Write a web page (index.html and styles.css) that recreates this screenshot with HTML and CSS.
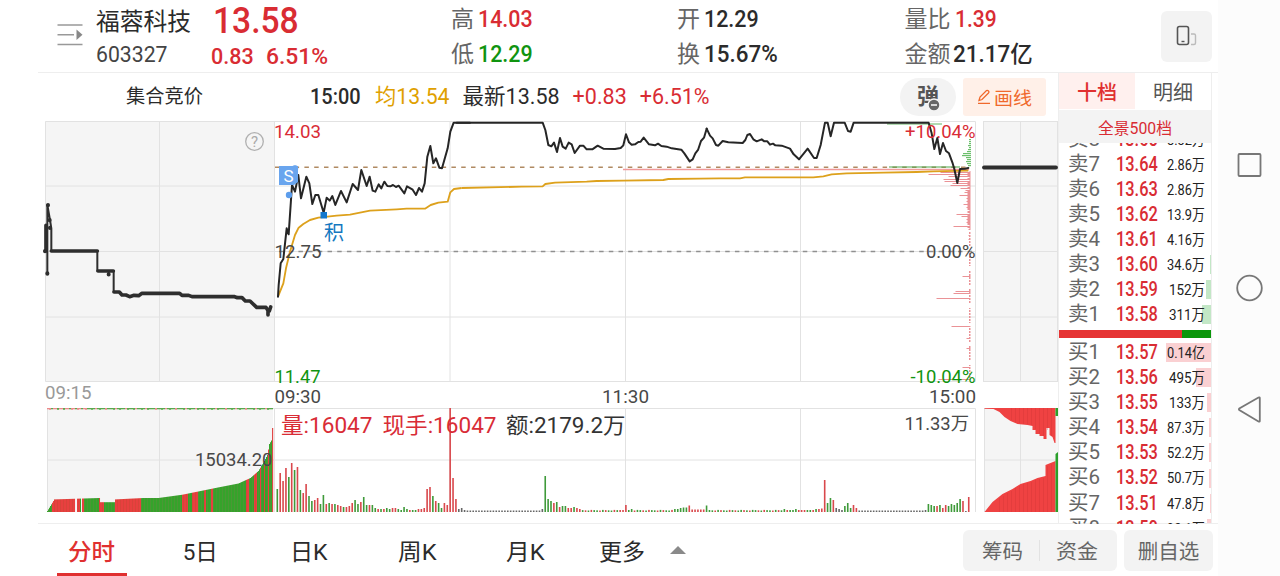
FILE: index.html
```html
<!DOCTYPE html>
<html lang="zh-CN">
<head>
<meta charset="utf-8">
<title>福蓉科技 603327</title>
<link rel="stylesheet" href="styles.css">
</head>
<body>
<div class="app">
  <header class="head">
    <svg class="menu" width="28" height="24" viewBox="0 0 28 24"><g fill="none" stroke="#999" stroke-width="1.5"><path d="M1.500 2H26.500M1.500 11.700H18M1.500 21.500H26.500"/></g><path d="M20.500 6.500L26.500 11.700L20.500 17Z" fill="#888"/></svg>
    <div class="col c-name"><div class="name"><span data-w="95">福蓉科技</span></div><div class="code"><span data-w="72">603327</span></div></div>
    <div class="col c-price red"><div class="price"><span data-w="86">13.58</span></div><div class="chg"><span data-w="43">0.83</span><span class="pct" data-w="62">6.51%</span></div></div>
    <div class="col c-hi"><div><i>高</i><b class="red" data-w="55">14.03</b></div><div><i>低</i><b class="green" data-w="55">12.29</b></div></div>
    <div class="col c-open"><div><i>开</i><b data-w="55">12.29</b></div><div><i>换</i><b data-w="74">15.67%</b></div></div>
    <div class="col c-vol"><div><i>量比</i><b class="red" data-w="42">1.39</b></div><div><i>金额</i><b class="amt" data-w="80">21.17亿</b></div></div>
    <div class="rot"><svg width="22" height="22" viewBox="0 0 22 22" fill="none"><rect x="2.500" y="1.500" width="11" height="18" rx="2" stroke="#555" stroke-width="1.600"/><path d="M6.500 16.500H9.500" stroke="#555" stroke-width="1.400"/><path d="M16 9H19Q20.500 9 20.500 10.500V18Q20.500 19.500 19 19.500H16" stroke="#bbb" stroke-width="1.400"/></svg></div>
  </header>
  <main class="main">
    <section class="left">
      <div class="bar">
        <span class="t-auc" data-w="77">集合竞价</span>
        <span class="t-time" data-w="51">15:00</span>
        <span class="t-avg" data-w="75">均13.54</span>
        <span class="t-new" data-w="97">最新13.58</span>
        <span class="t-d red" data-w="54">+0.83</span>
        <span class="t-p red" data-w="70">+6.51%</span>
        <div class="danmu"><b>弹</b><svg width="14" height="14" viewBox="0 0 14 14"><circle cx="7" cy="7" r="6" fill="#666" stroke="#f3f3f3" stroke-width="1.500"/><path d="M4 7H10" stroke="#fff" stroke-width="1.500"/></svg></div>
        <div class="draw"><svg width="15" height="16" viewBox="0 0 15 16" fill="none" stroke="#f0692c" stroke-width="1.300"><path d="M2 11.500L3 8L9.500 1.500Q10.500 1 11.500 2Q12.500 3 11.500 4L5 10.500ZM1 14.300H13"/></svg><span data-w="38">画线</span></div>
      </div>
      <svg class="chart" width="1020" height="402" viewBox="38 121 1020 402">
        <rect x="45" y="121" width="229" height="260.500" fill="#f5f5f5"/>
        <rect x="47" y="408" width="226" height="104" fill="#f5f5f5"/>
        <rect x="983" y="121" width="75" height="260.500" fill="#f5f5f5"/>
        <rect x="984.500" y="408" width="73.500" height="104" fill="#f5f5f5"/>
        <g class="grid">
          <path d="M45.500 381.500V121.500H975.500V381.500ZM45.500 186H975.500M45.500 251.500H975.500M45.500 317H975.500M159.500 121V381M450 121V381M625.500 121V381M800.500 121V381M274.500 121V381M983 121.500H1058M983 186H1058M983 251.500H1058M983 317H1058M983 381.500H1058M983.500 121V381M1020.500 121V381M1057.500 121V381"/>
          <path d="M47.500 512V408.500H975.500V512M47.500 460H975.500M159.500 408V512M274.500 408V512M450 408V512M625.500 408V512M800.500 408V512M984.500 408V512M984 408.500H1058M984 460H1058M1020.500 408V512"/>
        </g>
        <g id="auction"></g>
        <g transform="translate(984.500 408)">
          <path fill="#ef4242" d="M0 0H71V35H70L68 29L65 27V20H62V31H59V28H55V26H51V22H48V18L43 17L33 16L26 13L20 9L15 4L9 1L0 .8Z"/>
          <path fill="#ef4242" d="M0 104L8 94L18 86L28 81L36 76L46 73L53 70L61 68V57L71 53V104Z"/>
          <path fill="#2ba02b" d="M71 0H73.500V8H71ZM71 46L73.500 44V104H71Z"/>
          <path stroke="#c83232" stroke-opacity=".35" stroke-width=".8" d="M15 104V90M19 104V88M23 104V85M27 104V83M31 104V80M35 104V78M39 104V76M43 104V75M47 104V74M51 104V72M55 104V71M59 104V70M63 104V58M67 104V56M27 0V12M31 0V14M35 0V15M39 0V16M43 0V16M47 0V17M51 0V21M55 0V26M59 0V28M63 0V22M67 0V28"/>
        </g>
        <g id="volume"></g>
        <g id="chips"></g>
        <path d="M623 169.500H969" stroke="#f09a9a" stroke-width="1.300"/>
        <path d="M275 167.200H969" stroke="#b08a62" stroke-width="1.500" stroke-dasharray="4.500 5.300"/>
        <path d="M889 167H960" stroke="#4fa84f" stroke-width="1.200"/><path d="M887 124H942" stroke="#65b565" stroke-width="1.200"/>
        <path d="M279 251.500H975" stroke="#909090" stroke-width="1.600" stroke-dasharray="4.500 5.200"/>
        <g class="avg">
          <polyline transform="translate(270 115) scale(.33333)" points="24,545 40,505 48,460 60,410 75,360 86,338 100,327 120,315 145,308 200,302 240,299 270,293 300,287 380,283 410,281 465,281 482,270 505,263 533,260 541,232 552,222 575,219"/>
          <polyline transform="translate(440 115) scale(.33333)" points="65,219 245,215 308,214 316,207 345,203 440,200 470,198 550,197 670,195 685,192 780,191 840,190"/>
          <polyline transform="translate(700 115) scale(.33333)" points="60,190 120,190 135,187 340,187 370,184 395,178 440,175 550,173 650,171 700,169 805,167"/>
        </g>
        <g class="line">
          <polyline transform="translate(270 115) scale(.33333)" points="24,545 26,510 32,445 40,432 50,340 56,358 66,210 75,230 85,180 93,250 109,185 118,205 127,267 136,240 145,240 161,293 170,248 179,257 187,243 196,270 213,228 230,262 248,207 264,225 274,165 290,213 299,185 308,227 316,230 326,208 334,220 343,200 352,213 361,214 369,210 378,216 386,212 403,235 411,214 428,224 438,240 447,219 456,230 464,205 472,125 481,93 490,145 498,130 508,158 516,160 533,100 541,50 551,23 600,23"/>
          <polyline transform="translate(440 115) scale(.33333)" points="50,23 308,23 316,45 325,90 334,94 342,83 351,111 360,69 368,95 377,101 386,83 395,88 404,114 420,92 430,92 440,103 457,103 473,92 490,101 525,102 542,99 550,91 558,58 567,82 575,89 585,88 595,81 602,80 611,68 627,88 645,91 654,86 664,93 680,95 695,100 724,104 733,115 749,139 758,133 766,115 774,105 783,78 792,68 800,41"/>
          <polyline transform="translate(700 115) scale(.33333)" points="20,41 30,62 38,70 48,90 55,92 68,78 85,82 128,84 136,75 142,60 150,57 160,73 170,79 185,73 193,79 202,79 210,89 219,86 226,91 245,92 270,101 281,118 297,133 323,101 342,129 350,129 362,90 375,23 383,23 392,64 402,23 434,23 444,48 452,50 461,23 686,23 695,55 703,102 712,69 720,117 729,84 738,108 747,115 757,142 763,162 772,204 780,162 795,161 805,159"/>
        </g>
        <g transform="translate(38 115) scale(.33333)" fill="none" stroke="#2e2e2e" stroke-linecap="round" stroke-linejoin="round">
          <path stroke-width="11" d="M24 331V408M40 408H178M180 468H226M228 531H244L252 540H264L275 545L288 541L302 542L312 535H425L432 541H452L462 545H590L598 548H612L622 558H636L656 577H684L690 587V600M698 576L694 588"/>
          <path stroke-width="6" d="M28 475V270L36 315L40 340V408M178 408V468M212 468V478M227 468V531"/>
          <path stroke-width="12" d="M28 475V476M30 270V271M35 315V316M36 338V339M21 408V408.500M212 478V478.500"/>
        </g>
        <path d="M984 167.500H1056" stroke="#2e2e2e" stroke-width="3.800" stroke-linecap="round"/>
        <circle cx="295" cy="168.500" r="3.200" fill="#5597e8"/><circle cx="289" cy="195" r="3.200" fill="#5c9dec"/>
        <path d="M279 166H298V182L294 185H279Z" fill="#69a5ee"/>
        <text x="288.500" y="182" font-size="17" fill="#fff" text-anchor="middle">S</text>
        <rect x="320.500" y="212" width="6.500" height="6.500" fill="#1478cc"/>
        <text x="324" y="239.500" font-size="20" fill="#1478c0">积</text>
        <circle cx="254.500" cy="141.500" r="8.800" fill="none" stroke="#b0b0b0" stroke-width="1.300"/>
        <text x="254.500" y="147" font-size="15" fill="#aaa" text-anchor="middle">?</text>
        <g font-size="18.500" fill="#484848">
          <text x="274" y="138" fill="#d92c36" textLength="47" lengthAdjust="spacingAndGlyphs">14.03</text>
          <text x="274.500" y="257.700" textLength="47" lengthAdjust="spacingAndGlyphs">12.75</text>
          <text x="274.500" y="383" fill="#109410" textLength="46" lengthAdjust="spacingAndGlyphs">11.47</text>
          <text x="905" y="138" fill="#d92c36" textLength="70.500" lengthAdjust="spacingAndGlyphs">+10.04%</text>
          <text x="926" y="257.700" textLength="49.500" lengthAdjust="spacingAndGlyphs">0.00%</text>
          <text x="910.500" y="383" fill="#109410" textLength="65" lengthAdjust="spacingAndGlyphs">-10.04%</text>
          <text x="45" y="399" fill="#999" textLength="46.500" lengthAdjust="spacingAndGlyphs">09:15</text>
          <text x="274.500" y="402.500" textLength="46.500" lengthAdjust="spacingAndGlyphs">09:30</text>
          <text x="602" y="402.500" textLength="47" lengthAdjust="spacingAndGlyphs">11:30</text>
          <text x="929" y="402.500" textLength="47" lengthAdjust="spacingAndGlyphs">15:00</text>
          <text x="195" y="466" textLength="77.500" lengthAdjust="spacingAndGlyphs">15034.20</text>
          <text x="904.500" y="430" textLength="64.500" lengthAdjust="spacingAndGlyphs">11.33万</text>
        </g>
        <g font-size="22" fill="#d92c36">
          <text x="281" y="433" textLength="91.500" lengthAdjust="spacingAndGlyphs">量:16047</text>
          <text x="382.500" y="433" textLength="114" lengthAdjust="spacingAndGlyphs">现手:16047</text>
          <text x="506" y="433" fill="#333" textLength="119.500" lengthAdjust="spacingAndGlyphs">额:2179.2万</text>
        </g>
      </svg>
    </section>
    <aside class="book">
      <div class="btabs"><div class="on"><span data-w="40">十档</span></div><div><span data-w="40">明细</span></div></div>
      <div class="full"><span data-w="74">全景500档</span></div>
      <div class="rows sell" id="sell"></div>
      <div class="ratio"></div>
      <div class="rows buy" id="buy"></div>
    </aside>
  </main>
  <footer class="foot">
    <div class="tab on"><span data-w="47">分时</span></div><div class="tab"><span data-w="35">5日</span></div><div class="tab"><span data-w="38">日K</span></div><div class="tab"><span data-w="39">周K</span></div><div class="tab"><span data-w="39">月K</span></div>
    <div class="more"><span data-w="46">更多</span><svg width="16" height="8" viewBox="0 0 16 8"><path d="M0 8L8 0L16 8Z" fill="#8a8a8a"/></svg></div>
    <div class="btn two"><span data-w="41">筹码</span><em></em><span data-w="42">资金</span></div>
    <div class="btn one"><span data-w="62">删自选</span></div>
  </footer>
</div>
<nav class="nav"><svg width="62" height="576" viewBox="1218 0 62 576" fill="none" stroke="#777" stroke-width="1.800"><rect x="1238.500" y="154" width="22" height="22" rx="1"/><circle cx="1249.500" cy="288" r="12.300"/><path d="M1259.800 397.800V421.200Q1259.500 422 1258.500 421.500L1239.300 410Q1238.500 409.200 1239.300 408.500L1258.500 397.500Q1259.500 397 1259.800 397.800Z"/></svg></nav>
<script src="app.js"></script>
</body>
</html>
```
FILE: styles.css
```css
* { box-sizing: border-box; }
body { margin: 0; width: 1280px; height: 576px; overflow: hidden; display: flex; background: #fff; color: #2b2b2b; font-family: Roboto, "Noto Sans CJK SC", sans-serif; }
span, b, i { font-style: normal; font-weight: inherit; white-space: nowrap; display: inline-block; transform-origin: 0 50%; flex: none; }
.red { color: #d92c33; }
.green { color: #109410; }
.app { width: 1218px; height: 576px; padding-left: 38px; display: flex; flex-direction: column; }
.nav { width: 62px; height: 576px; background: #fcfcfc; }
.nav svg { display: block; }

.head { height: 73px; border-bottom: 1px solid #eee; display: flex; flex: none; }
.menu { margin: 23px 0 0 18px; width: 28px; flex: none; }
.col { padding-top: 3px; flex: none; }
.col > div { height: 34px; line-height: 34px; display: flex; font-size: 23px; font-weight: 500; }
.col > div + div { margin-top: 1px; }
.col i { color: #666; font-weight: 400; margin-right: 4px; }
.col .amt { margin-left: -2px; }
.c-name { margin-left: 12px; width: 115px; }
.col .name { font-size: 24px; font-weight: 400; padding-top: 2px; }
.col .code { font-size: 21.500px; font-weight: 400; color: #444; }
.c-price { width: 240px; }
.col .price { font-size: 37.500px; padding-left: 2px; }
.col .chg { font-size: 22.500px; padding-top: 1px; }
.pct { margin-left: 12px; }
.c-hi { width: 226px; }
.c-open { width: 227.500px; }
.c-vol { width: 256px; }
.rot { width: 51px; height: 51px; margin-top: 10.500px; border-radius: 6px; background: #f3f3f3; display: flex; align-items: center; justify-content: center; }

.main { height: 450px; display: flex; flex: none; }
.left { width: 1020px; flex: none; }
.bar { height: 48px; display: flex; align-items: center; font-size: 21.500px; }
.bar > span { line-height: 32px; height: 32px; }
.t-auc { margin-left: 87.500px; font-size: 19px; }
.t-time { margin-left: 107px; font-weight: 500; }
.t-avg { margin-left: 15px; color: #e0a000; }
.t-new { margin-left: 13px; }
.t-d { margin-left: 13px; }
.t-p { margin-left: 13px; }
.danmu { margin-left: 190.500px; width: 56px; height: 38px; border-radius: 19px; background: #f3f3f3; display: flex; align-items: center; justify-content: center; color: #555; flex: none; }
.danmu b { font-size: 22px; font-weight: 700; line-height: 30px; }
.danmu svg { margin: 15px -2px 0 -12px; }
.draw { margin-left: 7px; width: 83px; height: 38px; border-radius: 3px; background: #fff0e8; color: #f0692c; font-size: 18.500px; display: flex; align-items: center; justify-content: center; gap: 2px; flex: none; }
.chart { display: block; font-family: Roboto, "Noto Sans CJK SC", sans-serif; }
.grid path { fill: none; stroke: #e2e2e2; stroke-width: 1; }
.line polyline { fill: none; stroke: #262626; stroke-width: 6; stroke-linejoin: round; stroke-linecap: round; }
.avg polyline { fill: none; stroke: #dda11c; stroke-width: 5.500; stroke-linejoin: round; }

.book { width: 154px; border-left: 1px solid #eee; border-right: 1px solid #eee; display: flex; flex-direction: column; }
.btabs { height: 37px; display: flex; font-size: 20px; color: #555; flex: none; }
.btabs div { width: 76px; height: 36px; display: flex; align-items: center; justify-content: center; }
.btabs .on { background: #fff0ee; color: #e03030; font-weight: 500; }
.full { height: 33px; background: #f3f3f3; color: #d92c33; font-size: 16px; display: flex; align-items: center; justify-content: center; flex: none; }
.rows { display: flex; flex-direction: column; overflow: hidden; flex: none; }
.sell { height: 184.500px; justify-content: flex-end; }
.buy { height: 183.500px; }
.row { height: 25.100px; flex: none; display: grid; grid-template-columns: 48px 45px 1fr; align-items: center; justify-items: start; padding: 0 6.500px 0 9px; line-height: 25px; color: #666; font-size: 20.500px; background: linear-gradient(var(--c), var(--c)) right 50% / var(--d) 19px no-repeat; }
.row > span { margin-top: -1px; }
.row .p { font-size: 19.500px; font-weight: 500; color: #d92c33; }
.row .q { font-size: 14.500px; color: #222; justify-self: end; padding-top: 2px; }
.ratio { height: 8px; margin: 2px 0 2.500px; background: linear-gradient(90deg, #e63434 81%, #0a960a 81%); flex: none; }

.foot { height: 53px; border-top: 1px solid #eee; display: flex; font-size: 22.500px; }
.tab { width: 108.500px; display: flex; align-items: center; justify-content: center; padding-bottom: 1px; flex: none; }
.tab.on { width: 70px; margin: 0 19px; color: #e03030; font-weight: 500; border-bottom: 3px solid #e03030; padding: 2px 0 0; }
.more { width: 383px; padding: 0 0 1px 19px; display: flex; align-items: center; gap: 25px; flex: none; }
.btn { height: 41px; margin-top: 6px; border-radius: 6px; background: #f3f3f3; color: #666; font-size: 20.500px; display: flex; align-items: center; justify-content: center; flex: none; padding-bottom: 1px; }
.two { width: 154px; gap: 16px; }
.two em { width: 1px; height: 21px; background: #e2e2e2; }
.one { width: 89px; margin-left: 7px; }
```
FILE: app.js
```js
const NS = 'http://www.w3.org/2000/svg';
const R = '#d9484c', G = '#3f9a3a', K = '#666';
function rect(id, x, y, w, h, fill) {
  const r = document.createElementNS(NS, 'rect');
  r.setAttribute('x', x); r.setAttribute('y', y);
  r.setAttribute('width', w); r.setAttribute('height', h);
  r.setAttribute('fill', fill);
  document.getElementById(id).appendChild(r);
}

// minute volume: index -> colour letter + height
const vol = {};
function put(start, str) { str.split(' ').forEach((s, i) => { vol[start + i] = s; }); }
put(0, 'g23 r39 r31 r44 g35 r49 g42 r45 g22 r19 r28 g16 g11 r12 r14 g8 g17 r8 g9 r8 g8 r7 r6 g5 r5 r6 r9 g12 g8 r10 g15 g7 r7 g7 g4 r3 g3 r3 g4 g3 r4 r4 g3 g2 g5 g3 r2 g2 g2 r3 r3 r4 r23 r25 g16 r11 g9 g4 r9 r7 r104 r34 r13 k3 k4 k2');
put(92, 'k3 g36 g13 g11 r9 g10 r5 g6 g6 r4 r4 g5 r4 r3');
put(119, 'r2 r2 r7 g2 g3');
put(138, 'g3 g3 g4 g4.5 g4.5 r6.5 r2.5 r2.5 r2.5 r2.5 r2.5 g6.5 g2');
put(176, 'g3 r2 g2 g2 g3 r2 r2 r2 g2 g2 r2 g3 r3 r3.5 r32 g9 g14 r12 k4 k3 k2 g6 g9 g4 r7 r4');
put(225, 'k2 g8 g7 g6 r6 g7 r4 r7 g6 g8 g7 g9');
put(237, 'g13 r11 k1 r15');
for (let i = 0; i <= 240; i++) {
  const quiet = (i > 62 && i < 93) || (i > 201 && i < 226);
  const s = vol[i] || (quiet ? 'k1.5' : 'grrgg'[i * 3 % 5] + (1.5 + i * 7 % 4 * .2));
  const h = +s.slice(1);
  rect('volume', 276.5 + 2.881 * i, 512 - h, 1.6, h, { r: R, g: G, k: K }[s[0]]);
}

// call auction: matched volume profile
const prof = [[47, 1], [54, 12.6], [99, 14], [99.1, 9.8], [114.5, 9.8], [115, 12.6], [143, 14], [158, 14], [182, 17.3], [218, 24.6], [238, 28.5], [250, 34], [258, 41], [264, 51], [267, 57], [269, 68], [271.3, 72]];
const redSpans = [[52, 75], [77, 80], [82, 84], [99, 104], [115, 141], [182, 188], [192, 198], [204, 206], [211, 213], [246, 249], [254, 257], [260, 261], [264, 265], [268, 269]];
for (let x = 47; x < 271.5; x++) {
  if (x === 75 || x === 76 || x === 81) continue;
  let k = 0; while (k < prof.length - 2 && prof[k + 1][0] < x) k++;
  const a = prof[k], b = prof[k + 1];
  const h = a[1] + (b[1] - a[1]) * Math.min(1, (x - a[0]) / (b[0] - a[0]));
  const red = redSpans.some(s => x >= s[0] && x < s[1]);
  rect('auction', x, 512 - h, 1.03, h, red ? (x % 3 ? '#e8403f' : '#d8433a') : (x % 3 ? '#35a32b' : '#4a9835'));
}
rect('auction', 272, 428, 1.2, 84, '#e04848');
for (let x = 47; x < 273; x += 2) rect('auction', x, 408, 2, x % 7 < 2 ? 1.8 : 1.3, (x < 84 ? x % 3 : x % 5 === 0) ? '#ec8a8a' : '#5aa84e');

// price distribution bars, growing left from x = 970
for (let y = 139; y < 166; y += 2) { const l = [2, 2, 2, 3, 2, 3, 4, 8, 9, 5, 4, 5, 4, 3][(y - 139) / 2]; rect('chips', 971 - l, y, l, 1.2, '#6cbf6c'); }
const chips = { 172: 30, 174: 42, 176: 22, 179: 27, 181: 26, 183: 18, 185: 20, 188: 10, 190: 5, 192: 6, 195: 11, 198: 4, 201: 4, 204: 7, 207: 4, 211: 3, 214: 14, 216: 9, 219: 4, 222: 4, 226: 17, 229: 2, 235: 2, 239: 2, 276: 8, 291: 15, 293: 17, 298: 34, 326: 19, 338: 4, 348: 4, 367: 8, 379: 32 };
for (let y = 171; y < 380; y++) {
  const l = chips[y] || (y < 230 ? (y % 3 ? 3 : 1) : y % 3 !== 0 && y % 19 > 3 ? 1.5 : 0);
  if (l) rect('chips', 970.5 - l, y, l, 1, '#ea9296');
}

// order book
function rows(id, data, tint) {
  document.getElementById(id).innerHTML = data.map(([n, p, q, d]) =>
    `<div class="row" style="--c:${tint};--d:${d}px"><span data-w="32">${n}</span><span class="p" data-w="42">${p}</span><span class="q" data-w="${q.length > 4 || q.includes('.') ? 38 : 36}">${q}</span></div>`).join('');
}
rows('sell', [['卖8', '13.65', '8.32万', 0], ['卖7', '13.64', '2.86万', 0], ['卖6', '13.63', '2.86万', 0], ['卖5', '13.62', '13.9万', 0], ['卖4', '13.61', '4.16万', 0], ['卖3', '13.60', '34.6万', 1], ['卖2', '13.59', '152万', 5], ['卖1', '13.58', '311万', 9]], '#c3e7c6');
rows('buy', [['买1', '13.57', '0.14亿', 45], ['买2', '13.56', '495万', 15], ['买3', '13.55', '133万', 4], ['买4', '13.54', '87.3万', 2], ['买5', '13.53', '52.2万', 2], ['买6', '13.52', '50.7万', 2], ['买7', '13.51', '47.8万', 1], ['买8', '13.50', '92.1万', 4]], '#fad0d2');

// condense labels to their column width
document.querySelectorAll('[data-w]').forEach(el => {
  const w = +el.dataset.w, n = el.offsetWidth;
  el.style.transform = `scaleX(${w / n})`;
  el.style.marginRight = (w - n) + 'px';
});
```
